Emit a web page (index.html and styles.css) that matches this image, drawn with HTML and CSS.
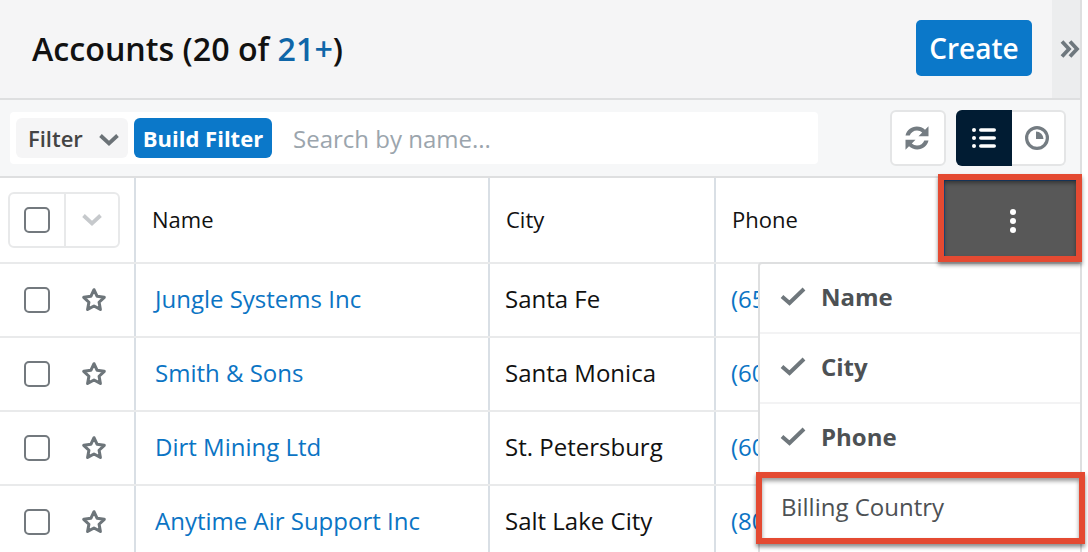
FILE: index.html
```html
<!DOCTYPE html>
<html lang="en">
<head>
  <meta charset="UTF-8" />
  <title>Accounts</title>
  <link rel="stylesheet" href="styles.css">
</head>
<body>
  <div class="page">
    <header class="top">
      <h1 class="title">Accounts (20 of <a class="count">21+</a>)</h1>
      <button class="create">Create</button>
      <div class="collapse">
        <svg width="20" height="20" viewBox="0 0 20 20"><path d="M2 2.500l7 7.500-7 7.500M10 2.500l7 7.500-7 7.500" fill="none" stroke="#6f787e" stroke-width="3.800"/></svg>
      </div>
    </header>

    <div class="toolbar">
      <div class="search">
        <div class="filter">Filter
          <svg class="filter-arrow" width="22" height="14" viewBox="0 0 22 14"><path d="M2.500 2.500l8.500 8 8.500-8" fill="none" stroke="#6b7277" stroke-width="3.800"/></svg>
        </div>
        <div class="build">Build Filter</div>
        <div class="placeholder">Search by name...</div>
      </div>
      <div class="refresh">
        <svg width="26" height="26" viewBox="0 0 26 26" fill="#747c82">
          <path d="M1.500 10.500C2.800 5 7.200 1.500 12.800 1.500c3.200 0 6 1.200 8.200 3.200l3.500-3.500v10h-10l3.700-3.700c-1.400-1.300-3.200-2-5.200-2-3.400 0-6.200 2-7.300 5z"/>
          <path d="M24.500 15.500c-1.300 5.500-5.700 9-11.300 9-3.200 0-6-1.200-8.200-3.200l-3.500 3.500v-10h10l-3.700 3.700c1.400 1.300 3.200 2 5.200 2 3.400 0 6.200-2 7.300-5z"/>
        </svg>
      </div>
      <div class="views">
        <div class="view view-active">
          <svg width="24" height="20" viewBox="0 0 24 20" fill="#fff">
            <circle cx="2" cy="2" r="2"/><circle cx="2" cy="10" r="2"/><circle cx="2" cy="18" r="2"/>
            <rect x="7" y="0.200" width="17" height="3.600" rx="1.800"/><rect x="7" y="8.200" width="17" height="3.600" rx="1.800"/><rect x="7" y="16.200" width="17" height="3.600" rx="1.800"/>
          </svg>
        </div>
        <div class="view view-clock">
          <svg width="24" height="24" viewBox="0 0 24 24"><circle cx="12" cy="12" r="10.400" fill="none" stroke="#747c82" stroke-width="3.200"/><path d="M11 5.500v7.500h7.500a7.500 7.500 0 0 0-7.500-7.500z" fill="#747c82"/></svg>
        </div>
      </div>
    </div>

    <div class="row head">
      <div class="cell cell-select">
        <div class="select-all">
          <span class="select-box"><span class="check"></span></span>
          <span class="select-more">
            <svg width="22" height="14" viewBox="0 0 22 14"><path d="M2.500 2.500l8.500 8 8.500-8" fill="none" stroke="#c6c9cc" stroke-width="3.800"/></svg>
          </span>
        </div>
      </div>
      <div class="cell cell-name">Name</div>
      <div class="cell cell-city">City</div>
      <div class="cell cell-phone">Phone</div>
    </div>

    <div class="row">
      <div class="cell cell-select"><span class="check"></span><svg class="star" viewBox="0 0 24 24"><path d="M12 2.500l2.900 6.100 6.600.9-4.800 4.600 1.200 6.600-5.900-3.200-5.900 3.200 1.200-6.600-4.800-4.600 6.600-.9z"/></svg></div>
      <div class="cell cell-name"><a>Jungle Systems Inc</a></div>
      <div class="cell cell-city">Santa Fe</div>
      <div class="cell cell-phone"><a>(65</a></div>
    </div>
    <div class="row">
      <div class="cell cell-select"><span class="check"></span><svg class="star" viewBox="0 0 24 24"><path d="M12 2.500l2.900 6.100 6.600.9-4.800 4.600 1.200 6.600-5.900-3.200-5.900 3.200 1.200-6.600-4.800-4.600 6.600-.9z"/></svg></div>
      <div class="cell cell-name"><a>Smith &amp; Sons</a></div>
      <div class="cell cell-city">Santa Monica</div>
      <div class="cell cell-phone"><a>(60</a></div>
    </div>
    <div class="row">
      <div class="cell cell-select"><span class="check"></span><svg class="star" viewBox="0 0 24 24"><path d="M12 2.500l2.900 6.100 6.600.9-4.800 4.600 1.200 6.600-5.900-3.200-5.900 3.200 1.200-6.600-4.800-4.600 6.600-.9z"/></svg></div>
      <div class="cell cell-name"><a>Dirt Mining Ltd</a></div>
      <div class="cell cell-city">St. Petersburg</div>
      <div class="cell cell-phone"><a>(60</a></div>
    </div>
    <div class="row">
      <div class="cell cell-select"><span class="check"></span><svg class="star" viewBox="0 0 24 24"><path d="M12 2.500l2.900 6.100 6.600.9-4.800 4.600 1.200 6.600-5.900-3.200-5.900 3.200 1.200-6.600-4.800-4.600 6.600-.9z"/></svg></div>
      <div class="cell cell-name"><a>Anytime Air Support Inc</a></div>
      <div class="cell cell-city">Salt Lake City</div>
      <div class="cell cell-phone"><a>(80</a></div>
    </div>

    <!-- column toggle + dropdown sit over the table -->
    <div class="toggle">
      <svg width="8" height="26" viewBox="0 0 8 26" fill="#fff"><circle cx="4" cy="4" r="3"/><circle cx="4" cy="13" r="3"/><circle cx="4" cy="22" r="3"/></svg>
    </div>
    <ul class="menu">
      <li class="menu-item on"><svg width="26" height="20" viewBox="0 0 26 20"><path d="M2 10.500l7.500 6.500L24 3" fill="none" stroke="#6f777c" stroke-width="4"/></svg>Name</li>
      <li class="menu-item on"><svg width="26" height="20" viewBox="0 0 26 20"><path d="M2 10.500l7.500 6.500L24 3" fill="none" stroke="#6f777c" stroke-width="4"/></svg>City</li>
      <li class="menu-item on"><svg width="26" height="20" viewBox="0 0 26 20"><path d="M2 10.500l7.500 6.500L24 3" fill="none" stroke="#6f777c" stroke-width="4"/></svg>Phone</li>
      <li class="menu-item">Billing Country</li>
    </ul>
    <div class="mark mark-toggle"></div>
    <div class="mark mark-item"></div>
  </div>
</body>
</html>
```

FILE: styles.css
```css
* {
  box-sizing: border-box;
}

html, body {
  height: 100%;
}

body {
  margin: 0;
  overflow: hidden;
  background-color: #fff;
  font-family: 'Open Sans', sans-serif;
  color: #111;
}

.page {
  position: relative;
  width: 1082px;
  height: 552px;
  overflow: visible;
}

.top {
  display: flex;
  align-items: center;
  height: 100px;
  padding-left: 32px;
  background-color: #f5f5f6;
  border-bottom: 2px solid #dedfe0;
  border-right: 2px solid #dedfe0;
}

.title {
  margin: 0 auto 2px 0;
  font-size: 32.200px;
  font-weight: 600;
  color: #111;
}

.count {
  color: #0f66a8;
}

.create {
  width: 116px;
  height: 56px;
  margin-bottom: 2px;
  padding: 0;
  background-color: #0b78c9;
  color: #fff;
  font-family: inherit;
  font-size: 28px;
  font-weight: 600;
  border: none;
  border-radius: 5px;
}

.collapse {
  display: flex;
  align-items: center;
  width: 28px;
  height: 98px;
  margin-left: 20px;
  padding-left: 8px;
  background-color: #ecedee;
}

.toolbar {
  display: flex;
  align-items: center;
  height: 78px;
  padding: 0 14px 0 10px;
  background-color: #f6f7f8;
  border-bottom: 2px solid #dedfe0;
  border-right: 2px solid #dedfe0;
}

.search {
  display: flex;
  align-items: center;
  gap: 6px;
  width: 808px;
  height: 52px;
  padding: 0 6px;
  background-color: #fff;
  border-radius: 4px;
}

.filter {
  display: flex;
  align-items: center;
  justify-content: space-between;
  width: 112px;
  height: 40px;
  padding: 0 8px 0 12px;
  background-color: #f5f5f6;
  border-radius: 6px;
  color: #444;
  font-size: 22px;
  font-weight: 600;
}

.filter-arrow {
  margin-top: 3px;
}

.build {
  display: flex;
  align-items: center;
  justify-content: center;
  width: 138px;
  height: 40px;
  background-color: #0b78c9;
  border-radius: 6px;
  color: #fff;
  font-size: 22px;
  font-weight: 700;
}

.placeholder {
  margin-left: 15px;
  color: #9ba5ad;
  font-size: 24px;
}

.refresh {
  display: flex;
  align-items: center;
  justify-content: center;
  width: 56px;
  height: 56px;
  margin-left: auto;
  padding-right: 2px;
  background-color: #fff;
  border: 2px solid #e4e5e6;
  border-radius: 6px;
}

.views {
  display: flex;
  width: 110px;
  height: 56px;
  margin-left: 10px;
  background-color: #fff;
  border: 2px solid #e4e5e6;
  border-left: none;
  border-radius: 6px;
}

.view {
  display: flex;
  align-items: center;
  justify-content: center;
  flex: 1;
}

.view-clock {
  padding-right: 2px;
}

.view-active {
  flex: none;
  width: 56px;
  height: 56px;
  margin-top: -2px;
  background-color: #011c33;
  border-radius: 6px 0 0 6px;
}

.row {
  display: flex;
  height: 74px;
  border-bottom: 2px solid #e9eaeb;
  font-size: 24px;
}

.head {
  height: 86px;
  font-size: 22px;
}

.cell {
  display: flex;
  align-items: center;
  height: 100%;
  padding-left: 15px;
  padding-bottom: 4px;
  border-right: 2px solid #d9dfe5;
}

.head .cell {
  padding-left: 16px;
  padding-bottom: 2px;
}

.cell-select {
  width: 136px;
  gap: 31px;
}

.row .cell-select {
  padding-left: 24px;
  padding-bottom: 0;
}

.head .cell-select {
  padding-left: 8px;
  padding-bottom: 0;
}

.cell-name {
  width: 354px;
  padding-left: 19px;
}

.cell-city {
  width: 226px;
}

.cell-phone {
  flex: 1;
  border-right: none;
}

.row a {
  color: #0b74c4;
}

.select-all {
  display: flex;
  width: 112px;
  height: 56px;
  border: 2px solid #e8e9ea;
  border-radius: 6px;
}

.select-box {
  display: flex;
  align-items: center;
  justify-content: center;
  width: 56px;
  border-right: 2px solid #e8e9ea;
}

.select-more {
  display: flex;
  align-items: center;
  justify-content: center;
  flex: 1;
}

.check {
  display: block;
  flex: none;
  width: 26px;
  height: 26px;
  background-color: #fff;
  border: 2px solid #73797e;
  border-radius: 5px;
}

.star {
  flex: none;
  width: 26px;
  height: 26px;
  fill: none;
  stroke: #6d757a;
  stroke-width: 2.800;
  stroke-linejoin: round;
}

.toggle {
  position: absolute;
  left: 944px;
  top: 180px;
  display: flex;
  align-items: center;
  justify-content: center;
  width: 132px;
  height: 76px;
  padding: 4px 0 0 4px;
  background-color: #585858;
  border-top: 1px solid #1f4f86;
  border-left: 1px solid #1f4f86;
}

.menu {
  position: absolute;
  left: 758px;
  top: 262px;
  width: 324px;
  height: 290px;
  margin: 0;
  padding: 0;
  list-style: none;
  background-color: #fff;
  border: 2px solid #dedfe0;
  border-bottom: none;
  border-radius: 4px 0 0 0;
}

.menu-item {
  display: flex;
  align-items: center;
  gap: 15px;
  height: 70px;
  padding: 0 0 4px 20px;
  border-bottom: 2px solid #f3f3f4;
  color: #4d5154;
  font-size: 24px;
  font-weight: 700;
}

.menu-item:last-child {
  padding: 0 0 6px 21px;
  border-bottom: none;
  font-weight: 400;
}

.mark {
  position: absolute;
  border: 6px solid #e44a32;
  box-shadow: 0 3px 4px rgba(0, 0, 0, 0.45), inset 0 3px 4px rgba(0, 0, 0, 0.4);
}

.mark-toggle {
  left: 938px;
  top: 174px;
  width: 144px;
  height: 88px;
}

.mark-item {
  left: 756px;
  top: 472px;
  width: 329px;
  height: 72px;
}
```
